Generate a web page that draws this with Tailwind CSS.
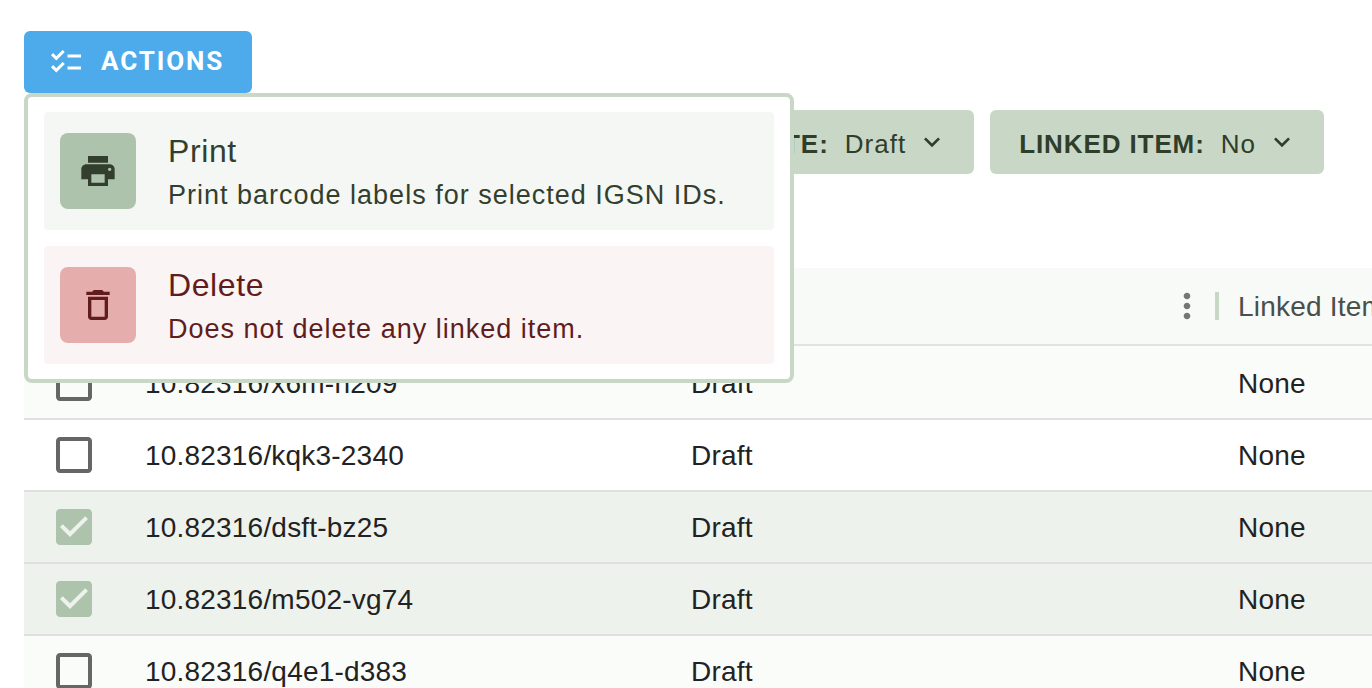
<!DOCTYPE html>
<html lang="en">

<head>
    <meta charset="UTF-8" />
    <title>IGSN IDs</title>
    <script src="https://cdn.jsdelivr.net/npm/@tailwindcss/browser@4"></script>
</head>

<body class="bg-white font-['Liberation_Sans',sans-serif] overflow-hidden h-[688px] w-[1372px]">
    <div class="relative pt-[31px] pl-6 h-[688px] overflow-hidden">

        <!-- actions button -->
        <button class="flex items-center w-[228px] h-[62px] pl-[24px] bg-[#4dabeb] rounded-[6px] text-white">
            <svg class="w-9 h-9" viewBox="0 0 24 24" fill="currentColor"><path d="M22 7h-9v2h9V7zm0 8h-9v2h9v-2zM5.54 11 2 7.46l1.41-1.41 2.12 2.12 4.24-4.24 1.41 1.41L5.54 11zm0 8L2 15.46l1.41-1.41 2.12 2.12 4.24-4.24 1.41 1.41L5.54 19z"/></svg>
            <span class="ml-[17px] mb-[2px] font-['Roboto',sans-serif] font-bold text-[26px] tracking-[1.9px] leading-none">ACTIONS</span>
        </button>

        <!-- filters -->
        <div class="flex justify-end gap-4 mt-[17px] pr-[48px]">
            <div class="flex items-center h-16 pl-[29px] pr-[26px] bg-[#c9d7c6] rounded-[6px] text-[#2f3d2b] text-[26px] tracking-[1px]">
                <span class="mt-1 font-bold">STATE:</span><span class="mt-1 ml-4">Draft</span>
                <svg class="w-8 h-8 ml-[10px]" viewBox="0 0 24 24" fill="currentColor"><path d="M16.59 8.59 12 13.17 7.41 8.59 6 10l6 6 6-6z"/></svg>
            </div>
            <div class="flex items-center h-16 pl-[29px] pr-[26px] bg-[#c9d7c6] rounded-[6px] text-[#2f3d2b] text-[26px] tracking-[1px]">
                <span class="mt-1 font-bold tracking-[0.9px]">LINKED ITEM:</span><span class="mt-1 ml-4">No</span>
                <svg class="w-8 h-8 ml-[10px]" viewBox="0 0 24 24" fill="currentColor"><path d="M16.59 8.59 12 13.17 7.41 8.59 6 10l6 6 6-6z"/></svg>
            </div>
        </div>

        <!-- table -->
        <div class="mt-[94px] w-[1348px] text-[28px] tracking-[0.2px] text-[#222222]">
            <div class="flex items-center h-[78px] bg-[#f8faf7] border-b-2 border-[#dfe5dd]">
                <div class="w-[1143px] shrink-0"></div>
                <svg class="w-10 h-10 shrink-0 text-[#757575]" viewBox="0 0 24 24" fill="currentColor"><path d="M12 8c1.1 0 2-.9 2-2s-.9-2-2-2-2 .9-2 2 .9 2 2 2zm0 2c-1.1 0-2 .9-2 2s.9 2 2 2 2-.9 2-2-.9-2-2-2zm0 6c-1.1 0-2 .9-2 2s.9 2 2 2 2-.9 2-2-.9-2-2-2z"/></svg>
                <div class="w-1 h-7 shrink-0 ml-[8px] bg-[#c9d7c6]"></div>
                <div class="ml-[19px] mt-[2px] shrink-0 whitespace-nowrap text-[#4a4f49]">Linked Item</div>
            </div>

            <div class="flex items-center h-[74px] pt-[2px] bg-[#fafcf9] border-b-2 border-[#e0e0e0]">
                <svg class="w-12 h-12 ml-[26px] mr-[47px] text-[#666666]" viewBox="0 0 24 24" fill="currentColor"><path d="M19 5v14H5V5h14m0-2H5c-1.1 0-2 .9-2 2v14c0 1.1.9 2 2 2h14c1.1 0 2-.9 2-2V5c0-1.1-.9-2-2-2z"/></svg>
                <div class="mt-[2px] w-[546px]">10.82316/x6m-n209</div>
                <div class="mt-[2px] w-[547px]">Draft</div>
                <div class="mt-[2px]">None</div>
            </div>
            <div class="flex items-center h-[72px] bg-white border-b-2 border-[#e0e0e0]">
                <svg class="w-12 h-12 ml-[26px] mr-[47px] text-[#666666]" viewBox="0 0 24 24" fill="currentColor"><path d="M19 5v14H5V5h14m0-2H5c-1.1 0-2 .9-2 2v14c0 1.1.9 2 2 2h14c1.1 0 2-.9 2-2V5c0-1.1-.9-2-2-2z"/></svg>
                <div class="mt-[2px] w-[546px]">10.82316/kqk3-2340</div>
                <div class="mt-[2px] w-[547px]">Draft</div>
                <div class="mt-[2px]">None</div>
            </div>
            <div class="flex items-center h-[72px] bg-[#eef2ed] border-b-2 border-[#e0e0e0]">
                <svg class="w-12 h-12 ml-[26px] mr-[47px] text-[#aec3ac]" viewBox="0 0 24 24" fill="currentColor"><path d="M19 3H5c-1.11 0-2 .9-2 2v14c0 1.1.89 2 2 2h14c1.11 0 2-.9 2-2V5c0-1.1-.89-2-2-2zm-9 14-5-5 1.41-1.41L10 14.17l7.59-7.59L19 8l-9 9z"/></svg>
                <div class="mt-[2px] w-[546px]">10.82316/dsft-bz25</div>
                <div class="mt-[2px] w-[547px]">Draft</div>
                <div class="mt-[2px]">None</div>
            </div>
            <div class="flex items-center h-[72px] bg-[#eef2ed] border-b-2 border-[#e0e0e0]">
                <svg class="w-12 h-12 ml-[26px] mr-[47px] text-[#aec3ac]" viewBox="0 0 24 24" fill="currentColor"><path d="M19 3H5c-1.11 0-2 .9-2 2v14c0 1.1.89 2 2 2h14c1.11 0 2-.9 2-2V5c0-1.1-.89-2-2-2zm-9 14-5-5 1.41-1.41L10 14.17l7.59-7.59L19 8l-9 9z"/></svg>
                <div class="mt-[2px] w-[546px]">10.82316/m502-vg74</div>
                <div class="mt-[2px] w-[547px]">Draft</div>
                <div class="mt-[2px]">None</div>
            </div>
            <div class="flex items-center h-[72px] bg-[#fafcf9] border-b-2 border-[#e0e0e0]">
                <svg class="w-12 h-12 ml-[26px] mr-[47px] text-[#666666]" viewBox="0 0 24 24" fill="currentColor"><path d="M19 5v14H5V5h14m0-2H5c-1.1 0-2 .9-2 2v14c0 1.1.9 2 2 2h14c1.1 0 2-.9 2-2V5c0-1.1-.9-2-2-2z"/></svg>
                <div class="mt-[2px] w-[546px]">10.82316/q4e1-d383</div>
                <div class="mt-[2px] w-[547px]">Draft</div>
                <div class="mt-[2px]">None</div>
            </div>
        </div>

        <!-- actions menu -->
        <div class="absolute left-6 top-[93px] w-[770px] h-[290px] bg-white border-4 border-[#c9d7c6] rounded-[8px] px-4 pt-[15px] flex flex-col gap-4">
            <div class="flex items-center h-[118px] pl-4 bg-[#f5f7f4] rounded-[4px] text-[#333f2e]">
                <div class="flex items-center justify-center w-[76px] h-[76px] bg-[#aec3ac] rounded-[8px]">
                    <svg class="w-10 h-10" viewBox="0 0 24 24" fill="currentColor"><path d="M19 8H5c-1.66 0-3 1.34-3 3v6h4v4h12v-4h4v-6c0-1.66-1.34-3-3-3zm-3 11H8v-5h8v5zm3-7c-.55 0-1-.45-1-1s.45-1 1-1 1 .45 1 1-.45 1-1 1zm-1-9H6v4h12V3z"/></svg>
                </div>
                <div class="ml-[32px] pt-[2px]">
                    <div class="text-[32px] leading-[38px] tracking-[0.6px]">Print</div>
                    <div class="mt-[8px] text-[27px] leading-[34px] tracking-[1px] whitespace-nowrap">Print barcode labels for selected IGSN IDs.</div>
                </div>
            </div>
            <div class="flex items-center h-[118px] pl-4 bg-[#faf4f5] rounded-[4px] text-[#611c1c]">
                <div class="flex items-center justify-center w-[76px] h-[76px] bg-[#e5aeac] rounded-[8px]">
                    <svg class="w-10 h-10" viewBox="0 0 24 24" fill="currentColor"><path d="M6 19c0 1.1.9 2 2 2h8c1.1 0 2-.9 2-2V7H6v12zM8 9h8v10H8V9zm7.5-5-1-1h-5l-1 1H5v2h14V4z"/></svg>
                </div>
                <div class="ml-[32px] pt-[2px]">
                    <div class="text-[32px] leading-[38px] tracking-[0.6px]">Delete</div>
                    <div class="mt-[8px] text-[27px] leading-[34px] tracking-[1px] whitespace-nowrap">Does not delete any linked item.</div>
                </div>
            </div>
        </div>
    </div>
</body>

</html>
